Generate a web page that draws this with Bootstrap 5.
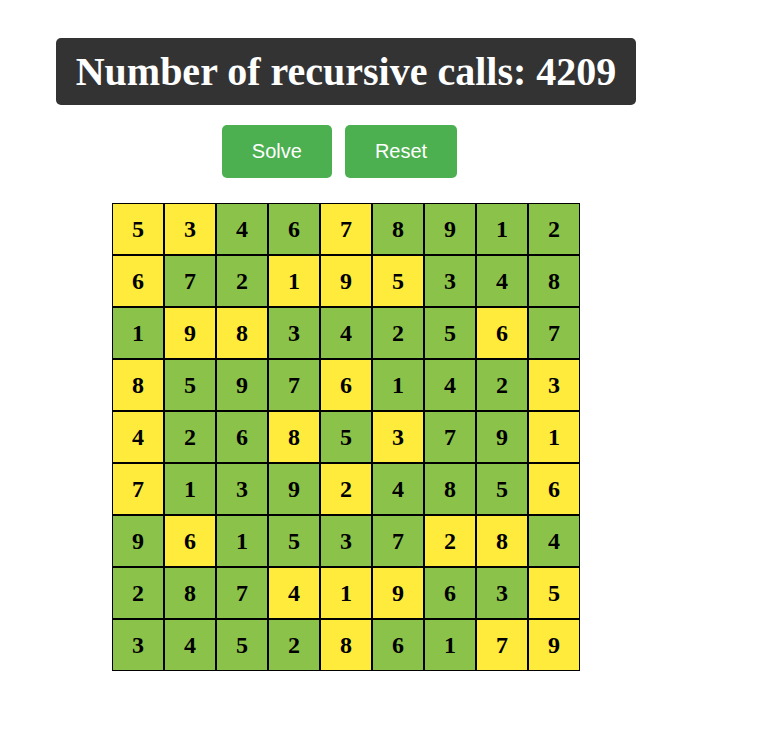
<!DOCTYPE html>
<html lang="en">
<head>
<meta charset="utf-8">
<meta name="viewport" content="width=device-width, initial-scale=1">
<title>Sudoku Solver</title>
<link href="https://cdn.jsdelivr.net/npm/bootstrap@5.3.0/dist/css/bootstrap.min.css" rel="stylesheet">
<style>
  body { background: #fff; font-family: "Liberation Serif", "Times New Roman", serif; }
  .solver { padding: 38px 65px 38px 0; }
  .call-count { background: #333; color: #fff; font-size: 40px; line-height: 47px; padding: 10px 20px; border-radius: 5px; }
  .actions { gap: 13px; margin: 20px 13px 25px 0; }
  .btn-solver {
    --bs-btn-color: #fff; --bs-btn-bg: #4caf50;
    --bs-btn-hover-color: #fff; --bs-btn-hover-bg: #449d48;
    --bs-btn-active-color: #fff; --bs-btn-active-bg: #3d8b40;
    --bs-btn-padding-x: 30px; --bs-btn-padding-y: 15px;
    --bs-btn-font-size: 20px; --bs-btn-line-height: 23px;
    --bs-btn-border-width: 0; --bs-btn-border-radius: 5px;
    --bs-btn-font-family: "Liberation Sans", Arial, sans-serif;
  }
  .board { border-collapse: separate; border-spacing: 0; color: #000; }
  .board td { width: 52px; height: 52px; padding: 0; border: 1px solid #000; background: #8bc34a; font-size: 24px; line-height: 28px; }
  .board td.given { background: #ffeb3b; }
</style>
<script src="https://cdn.jsdelivr.net/npm/bootstrap@5.3.0/dist/js/bootstrap.bundle.min.js"></script>
</head>
<body>
<main class="solver d-flex flex-column align-items-center">
  <h1 class="call-count fw-bold text-center mb-0">Number of recursive calls: 4209</h1>
  <div class="actions d-flex">
    <button type="button" class="btn btn-solver">Solve</button>
    <button type="button" class="btn btn-solver">Reset</button>
  </div>
  <table class="board fw-bold text-center align-middle" aria-label="Sudoku board"><tbody id="board"></tbody></table>
</main>
<script>
  const solution = ["534678912", "672195348", "198342567", "859761423", "426853791", "713924856", "961537284", "287419635", "345286179"];
  const puzzle   = ["53..7....", "6..195...", ".98....6.", "8...6...3", "4..8.3..1", "7...2...6", ".6....28.", "...419..5", "....8..79"];
  const board = document.getElementById("board");
  solution.forEach((line, r) => {
    const row = board.insertRow();
    [...line].forEach((digit, c) => {
      const cell = row.insertCell();
      cell.textContent = digit;
      if (puzzle[r][c] !== ".") cell.className = "given";
    });
  });
</script>
</body>
</html>
